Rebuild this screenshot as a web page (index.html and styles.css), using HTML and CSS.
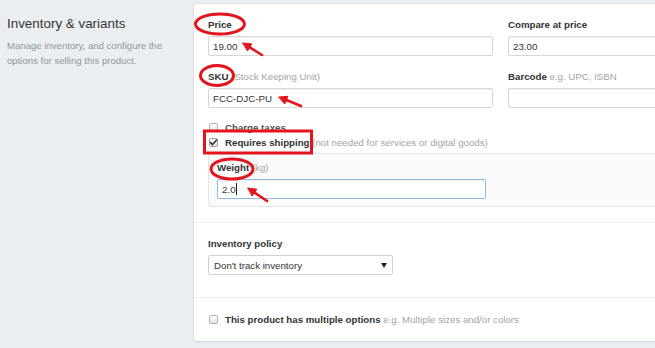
FILE: index.html
```html
<!DOCTYPE html>
<html lang="en">
<head>
<meta charset="utf-8">
<title>Inventory &amp; variants</title>
<link rel="stylesheet" href="styles.css">
</head>
<body>
<div class="page">
  <aside class="intro">
    <h2 class="intro-title">Inventory &amp; variants</h2>
    <p class="intro-text">Manage inventory, and configure the options for selling this product.</p>
  </aside>

  <section class="card">
    <div class="sec sec-main">
      <div class="grid">
        <div class="field">
          <label class="label">Price</label>
          <input class="input" type="text" value="19.00">
        </div>
        <div class="field">
          <label class="label">Compare at price</label>
          <input class="input" type="text" value="23.00">
        </div>
        <div class="field">
          <label class="label">SKU <span class="hint">(Stock Keeping Unit)</span></label>
          <input class="input" type="text" value="FCC-DJC-PU">
        </div>
        <div class="field">
          <label class="label">Barcode <span class="hint">e.g. UPC, ISBN</span></label>
          <input class="input" type="text" value="">
        </div>
      </div>

      <div class="checks">
        <div class="check">
          <span class="box"></span>
          <span class="check-text strong muted">Charge taxes</span>
        </div>
        <div class="check">
          <span class="box checked">
            <svg viewBox="0 0 9 9" width="9" height="9"><path d="M1.6 4.6 L3.6 6.6 L7.4 2.2" fill="none" stroke="#333" stroke-width="1.6" stroke-linecap="round" stroke-linejoin="round"/></svg>
          </span>
          <span class="check-text strong">Requires shipping</span>
          <span class="hint">&nbsp;(not needed for services or digital goods)</span>
        </div>
      </div>

      <div class="panel">
        <label class="label">Weight <span class="hint">(kg)</span></label>
        <div class="weight-wrap">
          <input class="input input-focus" type="text" value="2.0">
          <span class="caret"></span>
        </div>
      </div>
    </div>

    <div class="sec sec-policy">
      <label class="label">Inventory policy</label>
      <div class="select">
        <span>Don't track inventory</span>
        <svg class="select-arrow" viewBox="0 0 6 5" width="6" height="5"><polygon points="0,0 6,0 3,5" fill="#222"/></svg>
      </div>
    </div>

    <div class="sec sec-options">
      <div class="check">
        <span class="box"></span>
        <span class="check-text strong">This product has multiple options</span>
        <span class="hint">&nbsp;e.g. Multiple sizes and/or colors</span>
      </div>
    </div>
  </section>
</div>

<svg class="marks" width="655" height="348" viewBox="0 0 655 348">
  <g fill="none" stroke="#e3141c" stroke-width="3">
    <ellipse cx="220" cy="24" rx="24.5" ry="10"/>
    <ellipse cx="217" cy="75.5" rx="16.5" ry="10"/>
    <ellipse cx="232" cy="169" rx="21" ry="10"/>
    <rect x="204.5" y="131" width="107" height="22"/>
  </g>
  <g stroke="#e3141c" stroke-width="2.6" stroke-linecap="round" fill="#e3141c">
    <line x1="262" y1="55" x2="249.8" y2="47.3"/>
    <polygon points="243,43 251.9,43.9 247.7,50.7" stroke-width="1"/>
    <line x1="301" y1="106" x2="286.4" y2="100"/>
    <polygon points="279,97 287.9,96.3 284.9,103.7" stroke-width="1"/>
    <line x1="267" y1="201" x2="254.6" y2="192.5"/>
    <polygon points="248,188 256.9,189.2 252.3,195.8" stroke-width="1"/>
  </g>
</svg>
</body>
</html>
```

FILE: styles.css
```css
html, body {
  margin: 0;
  padding: 0;
  overflow: hidden;
}

body {
  background: #ebeef0;
  font-family: "Liberation Sans", Arial, sans-serif;
  font-size: 9.7px;
  color: #333;
  width: 655px;
  height: 348px;
  position: relative;
}

.page {
  display: flex;
  align-items: flex-start;
  padding-top: 4px;
}

.intro {
  flex: 0 0 194px;
  box-sizing: border-box;
  padding: 11px 20px 0 7px;
}

.intro-title {
  margin: 0 0 5px;
  font-size: 13.4px;
  line-height: 18px;
  font-weight: normal;
  color: #333;
}

.intro-text {
  margin: 0;
  font-size: 9.6px;
  line-height: 15px;
  color: #8e97a0;
}

.card {
  flex: 1 1 auto;
  min-width: 0;
  overflow: hidden;
  background: #fff;
  border-radius: 3px 0 0 3px;
  box-shadow: 0 0 0 1px rgba(0, 0, 0, 0.04), 0 1px 2px rgba(0, 0, 0, 0.08);
}

.sec {
  padding: 14px 14px;
}

.sec-main {
  padding-bottom: 15px;
  border-bottom: 1px solid #eeeff0;
}

.sec-policy {
  padding-bottom: 22px;
  border-bottom: 1px solid #ebebeb;
}

.grid {
  display: grid;
  grid-template-columns: 285px 285px;
  column-gap: 15px;
  row-gap: 14px;
}

.label {
  display: block;
  line-height: 14px;
  margin-bottom: 4px;
  font-weight: bold;
  color: #333;
}

.hint {
  font-weight: normal;
  color: #a4a4a4;
  white-space: nowrap;
}

.input {
  display: block;
  box-sizing: border-box;
  width: 100%;
  height: 20px;
  margin: 0;
  padding: 0 4px;
  border: 1px solid #d6d6d6;
  border-radius: 2px;
  background: #fff;
  box-shadow: inset 0 1px 1px rgba(0, 0, 0, 0.05);
  font-family: "Liberation Sans", Arial, sans-serif;
  font-size: 9.75px;
  color: #333;
  outline: none;
}

.checks {
  margin-top: 12px;
}

.check {
  display: flex;
  align-items: center;
  height: 15px;
  line-height: 15px;
  white-space: nowrap;
}

.box {
  flex: 0 0 auto;
  box-sizing: border-box;
  width: 9px;
  height: 9px;
  margin: 0 7px 0 1px;
  border: 1px solid #b4b4b4;
  border-radius: 2px;
  background: linear-gradient(#fbfbfb, #e6e6e6);
  display: flex;
  align-items: center;
  justify-content: center;
  overflow: visible;
}

.box.checked {
  border-color: #a0a0a0;
}

.box svg {
  flex: 0 0 auto;
}

.strong {
  font-weight: bold;
  color: #333;
}

.muted {
  color: #555;
}

.panel {
  margin-top: 3px;
  width: 585px;
  box-sizing: border-box;
  padding: 7px 8px;
  border: 1px solid #e4e4e4;
  border-radius: 3px;
  background: #fafafa;
}

.weight-wrap {
  position: relative;
  width: 269px;
}

.input-focus {
  border-color: #8dbbe0;
}

.caret {
  position: absolute;
  left: 18.5px;
  top: 4px;
  width: 1px;
  height: 12px;
  background: #222;
}

.select {
  box-sizing: border-box;
  width: 185px;
  height: 20px;
  padding: 0 5px 0 5px;
  border: 1px solid #d0d0d0;
  border-radius: 2px;
  background: #fff;
  display: flex;
  align-items: center;
  justify-content: space-between;
  color: #333;
}

.marks {
  position: absolute;
  top: 0;
  left: 0;
  pointer-events: none;
}
```
